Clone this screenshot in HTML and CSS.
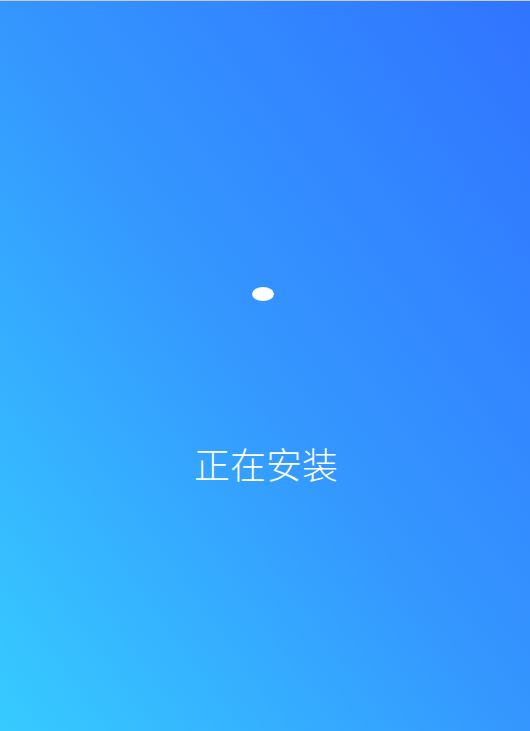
FILE: index.html
```html
<!DOCTYPE html>
<html lang="zh-CN">
<head>
  <meta charset="UTF-8">
  <meta name="viewport" content="width=device-width, initial-scale=1.0">
  <title>正在安装</title>
  <link rel="stylesheet" href="styles.css">
</head>
<body>
  <div class="installer">
    <div class="loader">
      <span class="dot"></span>
    </div>
    <p class="status">正在安装</p>
  </div>
</body>
</html>
```
FILE: styles.css
```css
* {
  margin: 0;
  padding: 0;
  box-sizing: border-box;
}
html, body {
  height: 100%;
}
body {
  font-family: "Noto Sans CJK SC", "Noto Sans", sans-serif;
  border-top: 1px solid #c9c9c9;
  background: linear-gradient(to top right, #36cbff 0%, #3496fe 50%, #3074ff 100%);
  color: #fff;
}
.installer {
  height: 100%;
  display: flex;
  flex-direction: column;
  align-items: center;
  padding-top: 286px;
}
.loader {
  width: 22px;
  height: 14px;
  display: flex;
  margin-left: -4px;
}
.dot {
  width: 22px;
  height: 14px;
  border-radius: 11px / 7px;
  background: #fff;
}
.status {
  margin-top: 136px;
  font-size: 36px;
  font-weight: 300;
  line-height: 52px;
  margin-left: 2px;
}
```
